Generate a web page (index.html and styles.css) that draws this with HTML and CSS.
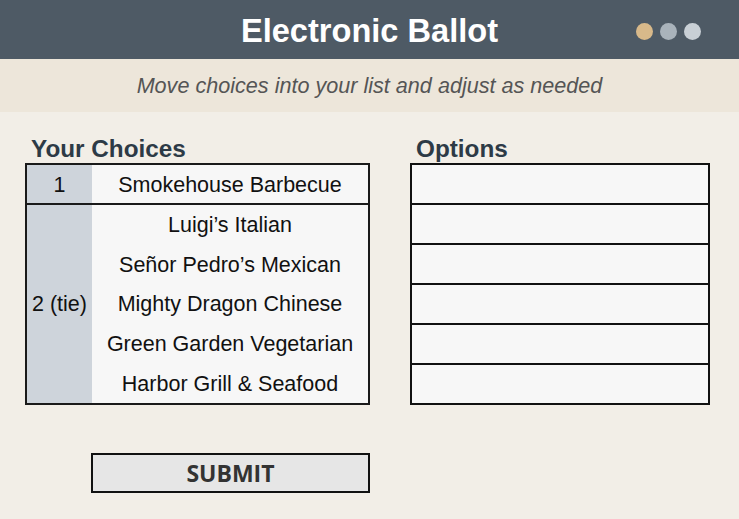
FILE: index.html
```html
<!doctype html>
<html lang="en">

<head>
    <meta charset="UTF-8" />
    <meta name="viewport" content="width=device-width, initial-scale=1.0" />
    <title>Electronic Ballot</title>
    <link rel="stylesheet" href="styles.css">
</head>

<body>
    <div class="topbar">
        <div></div>
        <div class="title">Electronic Ballot</div>
        <div class="dots">
            <span class="dot dot-tan"></span>
            <span class="dot dot-grey"></span>
            <span class="dot dot-light"></span>
        </div>
    </div>

    <div class="hint">Move choices into your list and adjust as needed</div>

    <div class="board">
        <div class="column">
            <div class="heading">Your Choices</div>
            <div class="choices">
                <div class="rank-row">
                    <div class="rank">1</div>
                    <div class="names">
                        <div class="name">Smokehouse Barbecue</div>
                    </div>
                </div>
                <div class="rank-row tie">
                    <div class="rank">2 (tie)</div>
                    <div class="names">
                        <div class="name">Luigi’s Italian</div>
                        <div class="name">Señor Pedro’s Mexican</div>
                        <div class="name">Mighty Dragon Chinese</div>
                        <div class="name">Green Garden Vegetarian</div>
                        <div class="name">Harbor Grill &amp; Seafood</div>
                    </div>
                </div>
            </div>
            <button class="submit">SUBMIT</button>
        </div>

        <div class="column">
            <div class="heading">Options</div>
            <div class="options">
                <div class="slot"></div>
                <div class="slot"></div>
                <div class="slot"></div>
                <div class="slot"></div>
                <div class="slot"></div>
                <div class="slot"></div>
            </div>
        </div>
    </div>
</body>

</html>
```

FILE: styles.css
```css
body {
    margin: 0;
    background-color: #f2eee7;
    font-family: "Liberation Sans", Arial, sans-serif;
}

.topbar {
    height: 59px;
    background-color: #4e5a65;
    display: grid;
    grid-template-columns: 1fr auto 1fr;
    align-items: center;
}

.title {
    color: #ffffff;
    font-size: 32.6px;
    font-weight: bold;
    padding-top: 3px;
}

.dots {
    display: flex;
    justify-content: flex-end;
    gap: 7px;
    padding-right: 38px;
    padding-top: 3px;
}

.dot {
    width: 17px;
    height: 17px;
    border-radius: 50%;
}

.dot-tan {
    background-color: #d8b98a;
}

.dot-grey {
    background-color: #a9b3bb;
}

.dot-light {
    background-color: #c9d0d6;
}

.hint {
    height: 53px;
    background-color: #ede6da;
    color: #555555;
    font-size: 21.6px;
    font-style: italic;
    display: flex;
    align-items: center;
    justify-content: center;
    padding-top: 1px;
    box-sizing: border-box;
}

.board {
    display: grid;
    grid-template-columns: 345px 300px;
    gap: 40px;
    padding: 22px 0 0 25px;
}

.column {
    display: flex;
    flex-direction: column;
}

.heading {
    height: 28px;
    line-height: 30px;
    margin-bottom: 1px;
    padding-left: 6px;
    font-size: 24.3px;
    font-weight: bold;
    color: #2d3a46;
}

.choices {
    border: 2px solid #1a1a1a;
    background-color: #f7f7f7;
}

.rank-row {
    display: grid;
    grid-template-columns: 65px 1fr;
}

.rank-row + .rank-row {
    border-top: 2px solid #1a1a1a;
}

.rank {
    background-color: #ced4db;
    display: flex;
    align-items: center;
    justify-content: center;
    font-size: 21.5px;
    color: #111111;
    padding-top: 2px;
}

.names {
    display: flex;
    flex-direction: column;
}

.name {
    height: 38px;
    display: flex;
    align-items: center;
    justify-content: center;
    font-size: 21.5px;
    color: #111111;
    padding-top: 2px;
    box-sizing: border-box;
}

.tie .name {
    height: 39.6px;
}

.options {
    border: 2px solid #111111;
    display: flex;
    flex-direction: column;
}

.slot {
    height: 38px;
    background-color: #f7f7f7;
}

.slot + .slot {
    border-top: 2px solid #111111;
}

.submit {
    margin: 48px 0 0 66px;
    height: 40px;
    border: 2px solid #111111;
    background-color: #e6e6e6;
    font-family: "Open Sans", sans-serif;
    font-size: 23px;
    font-weight: bold;
    color: #333333;
    padding: 0;
}
```
